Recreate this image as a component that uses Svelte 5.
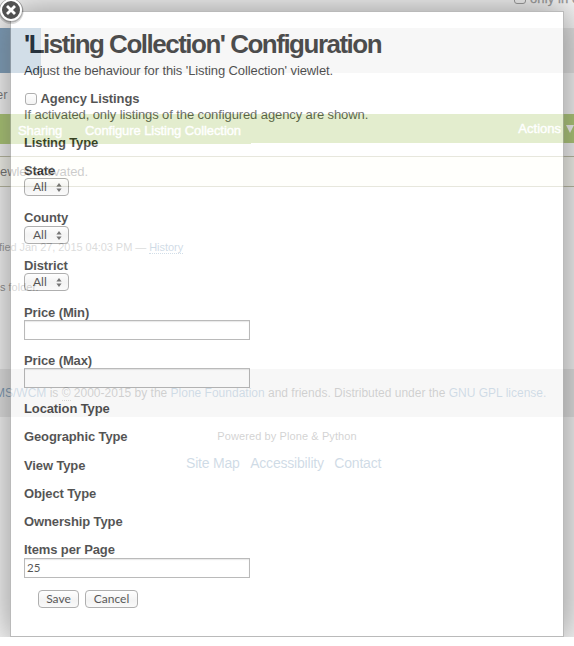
<script>
  // `gap` is the space above each field, `kind` picks the control under its label
  const fields = [
    { label: 'Listing Type', gap: 12 },
    { label: 'State', gap: 12, kind: 'select' },
    { label: 'County', gap: 13, kind: 'select', drop: 1 },
    { label: 'District', gap: 13, kind: 'select' },
    { label: 'Price (Min)', gap: 13, kind: 'text', value: '' },
    { label: 'Price (Max)', gap: 12, kind: 'text', value: '' },
    { label: 'Location Type', gap: 12 },
    { label: 'Geographic Type', gap: 12 },
    { label: 'View Type', gap: 13 },
    { label: 'Object Type', gap: 12 },
    { label: 'Ownership Type', gap: 12 },
    { label: 'Items per Page', gap: 12, kind: 'text', value: '25', drop: 1 }
  ];
</script>

<div class="window">
  <div class="page">
    <div class="search"><i class="tick"></i><span>only in current section</span></div>
    <div class="nav"><span class="tab"></span></div>
    <div class="crumb">er</div>
    <div class="actions">
      <div class="views"><span class="v1">Sharing</span><span>Configure Listing Collection</span></div>
      <span class="menu">Actions <span class="tri"></span></span>
    </div>
    <div class="message">ewlet activated.</div>
    <div class="byline">fied Jan 27, 2015 04:03 PM — <a class="dotted">History</a></div>
    <div class="folder">s folder.</div>
    <div class="footer">
      <span class="foot"><a>MS/WCM</a> is <span class="copy">©</span> 2000-2015 by the <a>Plone Foundation</a> and friends. Distributed under the <a>GNU GPL license.</a></span>
    </div>
    <div class="colophon"><span>Powered by Plone &amp; Python</span></div>
    <div class="links"><a>Site Map</a><a>Accessibility</a><a>Contact</a></div>
    <div class="mask"></div>

    <div class="modal">
      <h1><span>'Listing Collection' Configuration</span></h1>
      <p class="desc">Adjust the behaviour for this 'Listing Collection' viewlet.</p>
      <div class="check"><i class="box"></i><b>Agency Listings</b></div>
      <p class="help">If activated, only listings of the configured agency are shown.</p>
      {#each fields as f}
        <div class="field" style="margin-top: {f.gap}px">
          <b>{f.label}</b>
          {#if f.kind === 'select'}
            <div class="select" class:drop={f.drop}>
              <span>All</span>
              <svg width="6" height="9" viewBox="0 0 6 9"><path d="M3 0 5.6 3.4H.4zM3 9 .4 5.6h5.2z" fill="#333" /></svg>
            </div>
          {:else if f.kind === 'text'}
            <div class="input" class:drop={f.drop}>{f.value}</div>
          {/if}
        </div>
      {/each}
      <div class="buttons"><span class="btn save">Save</span><span class="btn cancel">Cancel</span></div>
    </div>
  </div>
  <svg class="close" width="28" height="28" viewBox="0 0 28 28">
    <circle cx="14" cy="14.5" r="12.6" fill="#000" opacity=".14" />
    <circle cx="14" cy="13.5" r="12" fill="#000" opacity=".2" />
    <circle cx="14" cy="13" r="10" fill="#515151" stroke="#fff" stroke-width="2" />
    <path d="m11 10 6 6m0-6-6 6" stroke="#fff" stroke-width="2.8" stroke-linecap="square" />
  </svg>
</div>

<style>
  :global(body) { background: #fff; }
  .window {
    position: relative; width: 574px; height: 646px; overflow: hidden;
    font: 13px/16px "Liberation Sans", Arial, sans-serif; color: #000; white-space: nowrap;
  }
  .page { position: relative; height: 637px; overflow: hidden; background: #fff; }
  .mask { position: absolute; inset: 0; background: rgba(255, 255, 255, .39); }

  .search { height: 28px; padding-left: 514px; display: flex; gap: 4px; color: #555; }
  .search span { margin-top: -9px; letter-spacing: .1px; -webkit-text-stroke: .3px #555; }
  .tick { width: 10px; height: 13px; margin-top: -11px; border: 1px solid #555; border-radius: 3px; flex: none; }
  .nav { height: 45px; background: #dadada; display: flex; }
  .tab { width: 41px; background: #205c90; }
  .crumb { height: 41px; line-height: 43px; margin-left: -4px; color: #111; }
  .actions { height: 29px; background: #74a80c; display: flex; justify-content: space-between; color: #fff; line-height: 33px; -webkit-text-stroke: .4px #fff; }
  .views { width: 251px; height: 30px; background: #74a80c; display: flex; letter-spacing: -.08px; }
  .v1 { margin-left: 18px; width: 67px; flex: none; }
  .menu { display: flex; gap: 5px; align-items: center; height: 29px; line-height: 29px; }
  .tri { border: 4px solid transparent; border-top: 8px solid #fff; border-bottom: 0; }
  .message { margin-top: 13px; height: 29px; border: solid #8a8a5a; border-width: 1px 0; background: #fffff0; line-height: 30px; color: #000; letter-spacing: -.1px; }
  .byline { height: 40px; margin: 40px 0 0 -1px; font-size: 11px; line-height: 40px; color: #4c4e50; letter-spacing: -.05px; }
  .byline .dotted { border-bottom: 1px dotted #205c90; }
  a { color: #0f4f84; }
  .folder { height: 40px; line-height: 40px; font-size: 11px; color: #333; }
  .footer { height: 48px; margin-top: 62px; background: #dadada; line-height: 48px; font-size: 12px; color: #111; }
  .foot { margin-left: -5px; }
  .copy { border-bottom: 1px dotted #333; }
  .colophon { height: 38px; line-height: 38px; text-align: center; font-size: 11px; letter-spacing: .1px; color: #222; }
  .links { height: 16px; display: flex; gap: 10.5px; padding-left: 186px; font-size: 14px; letter-spacing: -.2px; }

  .modal {
    position: absolute; left: 10px; top: 11px; width: 554px; height: 626px; box-sizing: border-box;
    border: 1px solid #999; background: #fff; opacity: .67; padding: 14px 13px 0;
    box-shadow: 0 0 39px 6.5px #666; display: flex; flex-direction: column; align-items: flex-start;
  }
  h1 { margin: 0; font-size: 26px; line-height: 36px; height: 36px; letter-spacing: -1.5px; }
  p { margin: 0; }
  .desc { height: 16px; margin-top: 1px; letter-spacing: -.1px; }
  .check { display: flex; align-items: center; height: 16px; margin-top: 11px; gap: 3.5px; }
  .check b { position: relative; top: 1px; letter-spacing: -.1px; }
  .box { width: 10px; height: 10px; border: 1px solid #888; border-radius: 3px; margin: 2px 0 0 1px; background: linear-gradient(#fff, #eee); }
  .help { height: 16px; line-height: 18px; color: #333; letter-spacing: -.1px; }
  .field { display: flex; flex-direction: column; }
  .field b { height: 16px; line-height: 18px; letter-spacing: -.12px; }
  .drop { margin-top: 1px; }
  .select {
    width: 45px; height: 18px; box-sizing: border-box; border: 1px solid #888; border-radius: 4px;
    display: flex; align-items: center; justify-content: space-between; padding: 0 6px 0 8px;
    background: linear-gradient(#fff, #eee 50%, #f8f8f8); font: 12px/16px "Lato", sans-serif;
  }
  .input {
    width: 226px; height: 20px; box-sizing: border-box; border: 1px solid #999; padding: 0 2px;
    font: 11.5px/18px "Lato", sans-serif; box-shadow: inset 0 1px 1px #ddd;
  }
  .buttons { display: flex; gap: 6px; margin: 12px 0 0 14px; }
  .btn {
    height: 18px; box-sizing: border-box; border: 1px solid #888; border-radius: 4px; text-align: center;
    font: 12px/16px "Lato", sans-serif; background: linear-gradient(#fff, #eee 60%, #f8f8f8);
  }
  .save { width: 41px; }
  .cancel { width: 53px; }
  .close { position: absolute; left: -3px; top: -3px; }
</style>
